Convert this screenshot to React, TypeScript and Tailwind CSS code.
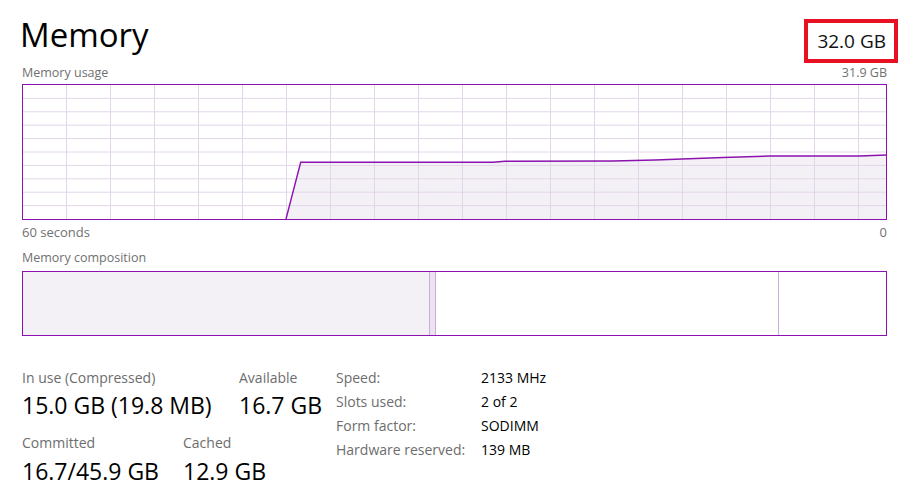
import React from "react";

const PURPLE = "#8b12ae";

function UsageChart() {
  const w = 863;
  const h = 134;
  const cols = [];
  for (let x = 43; x < w; x += 44) cols.push(x);
  const rows = [];
  for (let i = 1; i < 10; i++) rows.push(i * 13.4);

  const line =
    "263,134 277.7,77.3 470,77.3 482,76.3 590,76 632,75 700,72.5 747,71 837,71 863,70";

  return (
    <svg width={w} height={h} viewBox={`0 0 ${w} ${h}`} className="block">
      <polygon points={`${line} 863,134`} fill="#f4f1f6" />
      {cols.map((x) => (
        <line key={"c" + x} x1={x + 0.5} y1={0} x2={x + 0.5} y2={h} stroke="#e3d6ea" strokeWidth={1} />
      ))}
      {rows.map((y) => (
        <line key={"r" + y} x1={0} y1={y} x2={w} y2={y} stroke="#e3d6ea" strokeWidth={1} />
      ))}
      <polyline points={line} fill="none" stroke={PURPLE} strokeWidth={1.4} />
    </svg>
  );
}

export default function App() {
  return (
    <div
      className="w-[905px] h-[499px] bg-white overflow-hidden text-black"
      style={{ fontFamily: '"Open Sans", "Noto Sans", sans-serif' }}
    >
      {/* Header */}
      <div className="flex justify-between items-start h-[64px] pl-[20px] pr-[7px]">
        <div className="text-[33px] leading-none mt-[18px] text-black">Memory</div>
        <div className="mt-[19px] w-[94px] h-[44px] border-4 border-[#e81123] flex items-center justify-end pr-[8px]">
          <span className="text-[19px] leading-none text-[#111]">32.0 GB</span>
        </div>
      </div>

      <div className="px-[22px] pr-[18px]">
        <div className="flex justify-between h-[20px] pt-[3px] text-[12.5px] leading-none text-[#707070]">
          <span>Memory usage</span>
          <span>31.9 GB</span>
        </div>

        <div className="h-[136px] border border-[#8b12ae]">
          <UsageChart />
        </div>

        <div className="flex justify-between h-[24px] pt-[6px] text-[13px] leading-none text-[#707070]">
          <span>60 seconds</span>
          <span>0</span>
        </div>

        <div className="h-[27px] pt-[8px] text-[12.5px] leading-none text-[#707070]">Memory composition</div>

        <div className="h-[65px] border border-[#8b12ae] flex">
          <div className="w-[406px] bg-[#f4f1f6]" />
          <div className="w-[7px] bg-[#ede2f2] border-x border-[#c9aed9]" />
          <div className="w-[343px] border-r border-[#c9aed9]" />
          <div className="flex-1" />
        </div>

        {/* Stats */}
        <div className="flex items-start mt-[30px]">
          <div className="w-[314px] pt-[5px]">
            <div className="flex">
              <div className="w-[217px]">
                <div className="text-[14px] leading-none text-[#6d6d6d]">In use (Compressed)</div>
                <div className="text-[23px] leading-none mt-[9px]">15.0 GB (19.8 MB)</div>
              </div>
              <div>
                <div className="text-[14px] leading-none text-[#6d6d6d]">Available</div>
                <div className="text-[23px] leading-none mt-[9px]">16.7 GB</div>
              </div>
            </div>
            <div className="flex mt-[19px]">
              <div className="w-[161px]">
                <div className="text-[14px] leading-none text-[#6d6d6d]">Committed</div>
                <div className="text-[23px] leading-none mt-[10px]">16.7/45.9 GB</div>
              </div>
              <div>
                <div className="text-[14px] leading-none text-[#6d6d6d]">Cached</div>
                <div className="text-[23px] leading-none mt-[10px]">12.9 GB</div>
              </div>
            </div>
          </div>

          <div className="grid grid-cols-[145px_auto] content-start text-[14px] leading-[24px]">
            <span className="text-[#6d6d6d]">Speed:</span>
            <span>2133 MHz</span>
            <span className="text-[#6d6d6d]">Slots used:</span>
            <span>2 of 2</span>
            <span className="text-[#6d6d6d]">Form factor:</span>
            <span>SODIMM</span>
            <span className="text-[#6d6d6d]">Hardware reserved:</span>
            <span>139 MB</span>
          </div>
        </div>
      </div>
    </div>
  );
}
